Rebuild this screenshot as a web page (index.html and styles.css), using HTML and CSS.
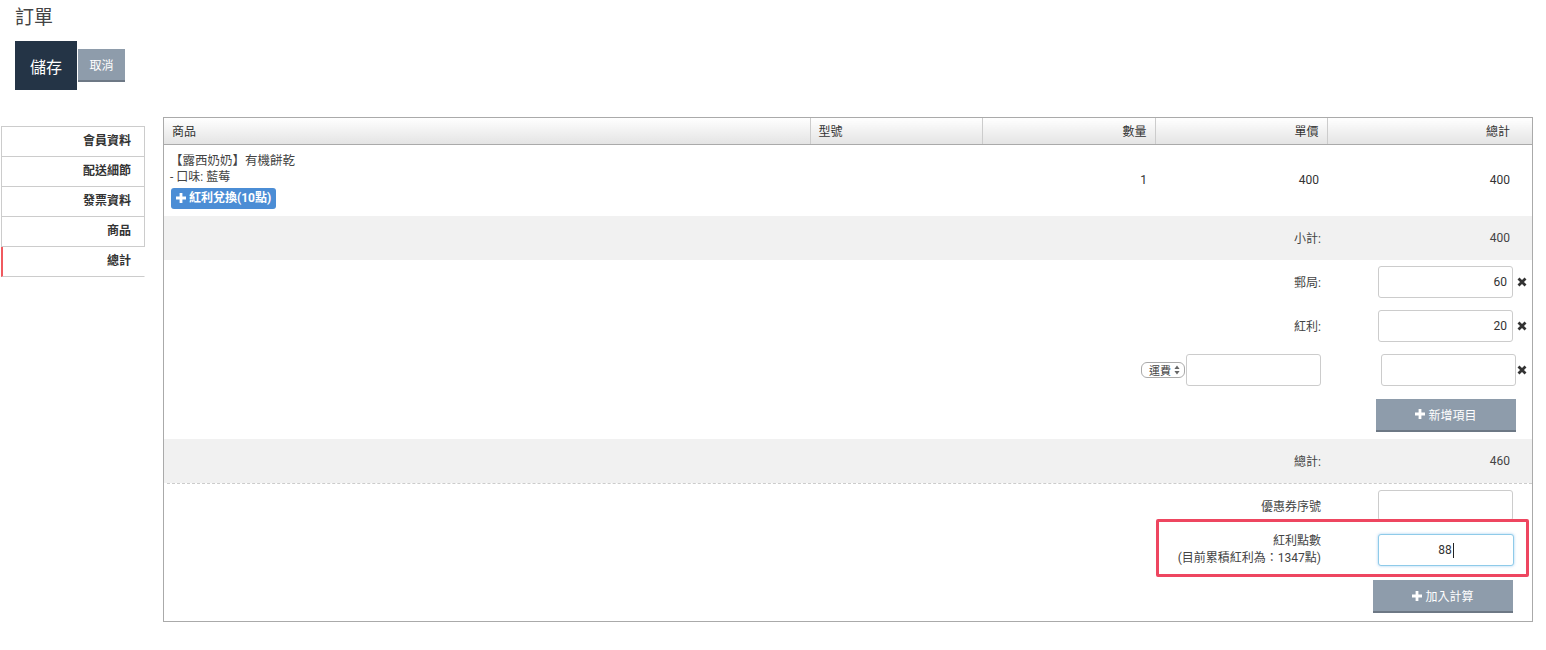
FILE: index.html
```html
<!DOCTYPE html>
<html lang="zh-Hant">
<head>
<meta charset="utf-8">
<title>訂單</title>
<link rel="stylesheet" href="styles.css">
</head>
<body>
<header class="page-head">
  <h1 class="title">訂單</h1>
  <div class="actions">
    <button class="btn btn-save">儲存</button>
    <button class="btn btn-cancel">取消</button>
  </div>
</header>
<main class="layout">
  <nav class="side">
    <a class="side-item">會員資料</a>
    <a class="side-item">配送細節</a>
    <a class="side-item">發票資料</a>
    <a class="side-item">商品</a>
    <a class="side-item active">總計</a>
  </nav>
  <section class="panel">
    <table class="items">
      <colgroup>
        <col class="c-name"><col class="c-model"><col class="c-qty"><col class="c-price"><col class="c-total">
      </colgroup>
      <thead>
        <tr>
          <th>商品</th>
          <th>型號</th>
          <th class="r">數量</th>
          <th class="r">單價</th>
          <th class="r last">總計</th>
        </tr>
      </thead>
      <tbody>
        <tr>
          <td class="prod">
            <div class="prod-name">【露西奶奶】有機餅乾</div>
            <div class="prod-opt">- 口味: 藍莓</div>
            <span class="btn-bonus"><svg class="plus" viewBox="0 0 10 10"><path d="M3.6 0h2.8v3.6H10v2.8H6.4V10H3.6V6.4H0V3.6h3.6z"/></svg>紅利兌換(10點)</span>
          </td>
          <td></td>
          <td class="r">1</td>
          <td class="r">400</td>
          <td class="r last">400</td>
        </tr>
      </tbody>
    </table>
    <div class="sum">
      <div class="sum-row shaded">
        <div class="lbl">小計:</div>
        <div class="val">400</div>
      </div>
      <div class="sum-row field-row">
        <div class="lbl">郵局:</div>
        <div class="val-input"><input class="inp" value="60"><svg class="del" viewBox="0 0 10 10"><path d="M1.5 1.5l7 7M8.5 1.5l-7 7"/></svg></div>
      </div>
      <div class="sum-row field-row">
        <div class="lbl">紅利:</div>
        <div class="val-input"><input class="inp" value="20"><svg class="del" viewBox="0 0 10 10"><path d="M1.5 1.5l7 7M8.5 1.5l-7 7"/></svg></div>
      </div>
      <div class="sum-row field-row">
        <div class="lbl lbl-custom">
          <span class="sel">運費<svg class="arrows" viewBox="0 0 6 10"><path d="M3 0.5L5.6 4H0.4zM3 9.5L0.4 6h5.2z"/></svg></span><input class="inp">
        </div>
        <div class="val-input shift"><input class="inp"><svg class="del" viewBox="0 0 10 10"><path d="M1.5 1.5l7 7M8.5 1.5l-7 7"/></svg></div>
      </div>
      <div class="sum-row btn-row">
        <div></div>
        <div class="val-btn"><button class="btn btn-gray add-item"><svg class="plus" viewBox="0 0 10 10"><path d="M3.6 0h2.8v3.6H10v2.8H6.4V10H3.6V6.4H0V3.6h3.6z"/></svg>新增項目</button></div>
      </div>
      <div class="sum-row shaded">
        <div class="lbl">總計:</div>
        <div class="val">460</div>
      </div>
      <div class="divider"></div>
      <div class="sum-row coupon-row">
        <div class="lbl">優惠券序號</div>
        <div class="val-input"><input class="inp inp-coupon"></div>
      </div>
      <div class="sum-row bonus-row">
        <div class="lbl lbl-two">紅利點數<br>(目前累積紅利為：1347點)</div>
        <div class="val-input"><div class="inp inp-focus">88<span class="caret"></span></div></div>
        <div class="highlight"></div>
      </div>
      <div class="sum-row calc-row">
        <div></div>
        <div class="val-btn calc"><button class="btn btn-gray"><svg class="plus" viewBox="0 0 10 10"><path d="M3.6 0h2.8v3.6H10v2.8H6.4V10H3.6V6.4H0V3.6h3.6z"/></svg>加入計算</button></div>
      </div>
    </div>
  </section>
</main>
</body>
</html>
```
FILE: styles.css
```css
* { box-sizing: border-box; }

body {
  margin: 0;
  font-family: Roboto, "Noto Sans CJK TC", sans-serif;
  font-size: 12px;
  color: #333;
  background: #fff;
}

.page-head { padding: 0 15px; }

.title {
  margin: 0;
  padding-top: 7px;
  font-size: 19px;
  line-height: 22px;
  font-weight: normal;
  color: #444;
}

.actions {
  display: flex;
  align-items: flex-start;
  margin-top: 12px;
}

.btn {
  border: 0;
  font-family: inherit;
  color: #fff;
  cursor: pointer;
  padding: 0;
}

.btn-save {
  width: 62px;
  height: 49px;
  background: #243446;
  font-size: 16px;
}

.btn-cancel {
  margin-top: 8px;
  margin-left: 1px;
  width: 47px;
  height: 33px;
  background: #8e9cab;
  border-bottom: 2px solid #6d7885;
  font-size: 12px;
}

.btn-gray {
  display: inline-flex;
  align-items: center;
  justify-content: center;
  gap: 3px;
  width: 140px;
  height: 33px;
  background: #8e9cab;
  border-bottom: 2px solid #6d7885;
  font-size: 12px;
}

.plus { width: 10px; height: 10px; fill: #fff; }

.layout {
  display: flex;
  align-items: flex-start;
  margin-top: 27px;
  padding-left: 1px;
}

.side {
  margin-top: 9px;
  width: 144px;
  border-top: 1px solid #ccc;
}

.side-item {
  display: block;
  height: 30px;
  line-height: 29px;
  border-left: 1px solid #ccc;
  border-right: 1px solid #ccc;
  border-bottom: 1px solid #ccc;
  padding-right: 13px;
  text-align: right;
  font-weight: bold;
  color: #333;
}

.side-item.active {
  border-left: 2px solid #f05a5f;
  border-right-color: transparent;
}

.panel {
  margin-left: 18px;
  width: 1370px;
  border: 1px solid #aaa;
}

.items {
  width: 100%;
  border-collapse: collapse;
  table-layout: fixed;
}

.c-name { width: 646px; }
.c-model { width: 172px; }
.c-qty { width: 173px; }
.c-price { width: 172px; }

.items th {
  height: 26px;
  padding: 0 8px;
  font-weight: normal;
  text-align: left;
  background: linear-gradient(#fff, #e4e4e4);
  border-bottom: 1px solid #aaa;
  border-left: 1px solid #ccc;
}

.items th:first-child { border-left: 0; }

.items td {
  padding: 0 8px;
  vertical-align: middle;
}

.items .r { text-align: right; }
.items .last { padding-right: 22px; }

.items td.prod {
  padding: 7px 7px 7px 6px;
  line-height: 17px;
  color: #444;
}

.prod-name { font-size: 12.5px; }

.btn-bonus {
  display: inline-flex;
  align-items: center;
  gap: 3px;
  margin-top: 2px;
  margin-left: 1px;
  height: 21px;
  padding: 0 5px;
  background: #4b8dd5;
  border-radius: 3px;
  color: #fff;
  font-weight: bold;
  font-size: 12px;
}

.sum-row {
  display: grid;
  grid-template-columns: 1fr 204px;
  align-items: center;
  position: relative;
}

.lbl {
  text-align: right;
  padding-right: 7px;
  color: #444;
}

.val {
  text-align: right;
  padding-right: 22px;
  color: #444;
}

.shaded {
  height: 44px;
  background: #f1f1f1;
}

.field-row { height: 44px; }

.val-input {
  display: flex;
  align-items: center;
  padding-left: 50px;
}

.val-input.shift { padding-left: 53px; }

.inp {
  width: 135px;
  height: 32px;
  border: 1px solid #ccc;
  border-radius: 3px;
  padding: 0 5px;
  font-family: inherit;
  font-size: 12px;
  color: #333;
  text-align: right;
  background: #fff;
}

.del {
  width: 10px;
  height: 10px;
  margin-left: 4px;
  stroke: #333;
  stroke-width: 2.8;
  fill: none;
}

.shift .del { margin-left: 1px; }

.lbl-custom {
  display: flex;
  align-items: center;
  justify-content: flex-end;
  gap: 1px;
}

.sel {
  display: inline-flex;
  align-items: center;
  gap: 3px;
  height: 16px;
  padding: 0 4px 0 7px;
  border: 1px solid #aaa;
  border-radius: 6px;
  font-size: 11px;
  color: #444;
  background: #fff;
}

.arrows { width: 6px; height: 10px; fill: #666; }

.btn-row { height: 47px; }

.val-btn { padding-left: 48px; }
.val-btn.calc { padding-left: 45px; }

.divider {
  border-top: 1px dashed #ccc;
  margin-left: 3px;
}

.coupon-row { height: 44px; }

.inp-coupon { height: 31px; }

.bonus-row { height: 45px; }

.lbl-two { line-height: 17px; }

.inp-focus {
  display: flex;
  align-items: center;
  justify-content: center;
  width: 136px;
  border-color: #8fcbe9;
  box-shadow: 0 0 3px rgba(102, 175, 233, 0.6);
  color: #333;
}

.caret {
  display: inline-block;
  width: 1px;
  height: 15px;
  background: #222;
  margin-left: 1px;
}

.highlight {
  position: absolute;
  left: 992px;
  right: 3px;
  top: -9px;
  height: 58px;
  border: 3px solid #ee4660;
  border-radius: 2px;
  pointer-events: none;
}

.calc-row { height: 48px; }
```
